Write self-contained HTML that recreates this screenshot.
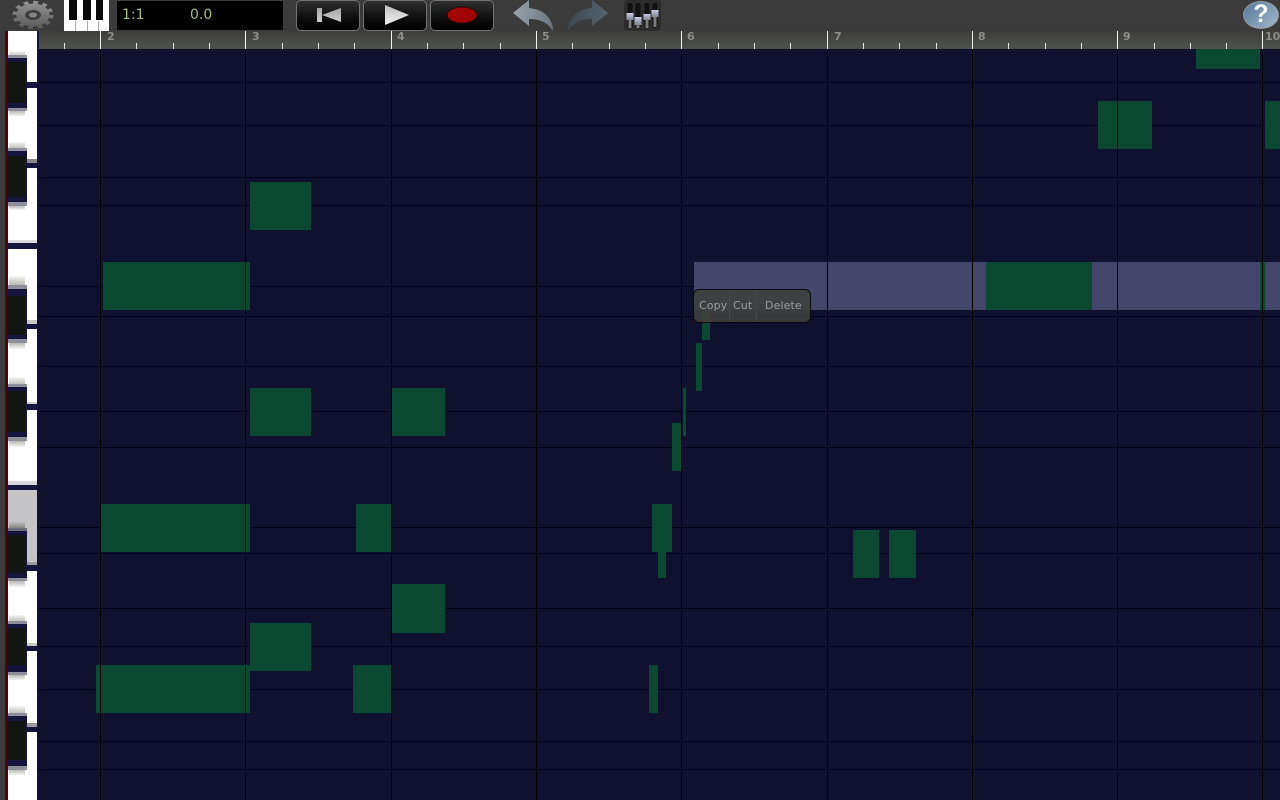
<!DOCTYPE html>
<html><head><meta charset="utf-8"><style>
html,body{margin:0;padding:0;background:#10112f;width:1280px;height:800px;overflow:hidden;font-family:"Liberation Sans",sans-serif}
div{position:absolute}
#top{left:0;top:0;width:1280px;height:31px;background:#3b3b3b}
#ruler{left:38px;top:31px;width:1242px;height:18px;background:linear-gradient(#3d3e3c,#50524e)}
.h{left:38px;width:1242px;height:1px;background:#00001a}
.v{top:49px;width:1px;height:751px;background:#000}
.n{background:#0a4832}
.t{top:43px;width:1px;height:6px;background:#e8e8e8}
.m{top:31px;width:1px;height:18px;background:#f2f2f2}
.l{top:30px;color:#8c8c8c;font:bold 11px "DejaVu Sans",sans-serif;line-height:13px}
.w{left:8px;width:29px;background:#fff}
.bk{left:7px;width:20px;background:#14143c}
.bi{left:7px;width:18px;background:#121412}
.g{left:8px;width:19px;background:#8f8f9c}
.f{left:9px;width:16px;background:linear-gradient(#f6f6f4,#b8b8b4)}
.f2{left:9px;width:16px;background:linear-gradient(#b8b8b4,#f6f6f4)}
.btn{top:0;width:62px;height:29px;border:1px solid #737373;border-radius:5px;background:linear-gradient(#303030,#101010 55%,#000)}
.p{top:298px;color:#9c9c9c;font:11px/15px "DejaVu Sans",sans-serif;letter-spacing:.1px}
</style></head><body>
<div style="left:0;top:31px;width:5px;height:769px;background:#3c3c3c"></div>
<div style="left:5px;top:31px;width:2px;height:769px;background:#4c0a0a"></div>
<div style="left:7px;top:31px;width:30px;height:769px;background:#14143c"></div>
<div class="w" style="top:31px;height:51px"></div>
<div class="w" style="top:88px;height:71px"></div>
<div class="w" style="top:168px;height:75px"></div>
<div class="w" style="top:249px;height:75px"></div>
<div class="w" style="top:329px;height:75px"></div>
<div class="w" style="top:410px;height:75px"></div>
<div class="w" style="top:490px;height:75px;background:#c5c5c8"></div>
<div class="w" style="top:571px;height:75px"></div>
<div class="w" style="top:651px;height:76px"></div>
<div class="w" style="top:732px;height:68px"></div>
<div style="left:27px;top:159px;width:10px;height:4px;background:#8a8888"></div>
<div style="left:27px;top:163px;width:10px;height:5px;background:#14143c"></div>
<div style="left:8px;top:240px;width:29px;height:3px;background:#dcdce0"></div>
<div style="left:27px;top:320px;width:10px;height:4px;background:#c8c8c4"></div>
<div style="left:27px;top:402px;width:10px;height:2px;background:#d0d0cc"></div>
<div style="left:8px;top:481px;width:29px;height:4px;background:#d8d8dc"></div>
<div style="left:27px;top:562px;width:10px;height:3px;background:#9a9a9a"></div>
<div style="left:27px;top:643px;width:10px;height:3px;background:#c8c8c4"></div>
<div style="left:27px;top:723px;width:10px;height:4px;background:#9a9a9a"></div>

<div class="f" style="top:51px;height:6px"></div><div class="g" style="top:55px;height:3px"></div><div class="bk" style="top:58px;height:50px"></div><div class="bi" style="top:62px;height:41px"></div><div class="g" style="top:108px;height:3px"></div><div class="f2" style="top:111px;height:5px"></div>
<div class="f" style="top:142px;height:7px"></div><div class="g" style="top:148px;height:3px"></div><div class="bk" style="top:151px;height:51px"></div><div class="bi" style="top:156px;height:41px"></div><div class="g" style="top:202px;height:4px"></div><div class="f2" style="top:206px;height:4px"></div>
<div class="f" style="top:276px;height:9px"></div><div class="g" style="top:285px;height:4px"></div><div class="bk" style="top:289px;height:50px"></div><div class="bi" style="top:296px;height:39px"></div><div class="g" style="top:339px;height:4px"></div><div class="f2" style="top:343px;height:6px"></div>
<div class="f" style="top:377px;height:8px"></div><div class="g" style="top:384px;height:3px"></div><div class="bk" style="top:387px;height:50px"></div><div class="bi" style="top:391px;height:41px"></div><div class="g" style="top:437px;height:4px"></div><div class="f2" style="top:441px;height:6px"></div>
<div class="f" style="top:521px;height:8px;background:linear-gradient(#c5c5c8,#7e7e7a)"></div><div class="g" style="top:528px;height:3px;background:#6e6e7a"></div><div class="bk" style="top:531px;height:47px"></div><div class="bi" style="top:535px;height:38px"></div><div class="g" style="top:578px;height:3px"></div><div class="f2" style="top:581px;height:6px"></div>
<div class="f" style="top:615px;height:7px"></div><div class="g" style="top:621px;height:3px"></div><div class="bk" style="top:624px;height:48px"></div><div class="bi" style="top:628px;height:37px"></div><div class="g" style="top:672px;height:3px"></div><div class="f2" style="top:675px;height:5px"></div>
<div class="f" style="top:706px;height:8px"></div><div class="g" style="top:713px;height:3px"></div><div class="bk" style="top:716px;height:50px"></div><div class="bi" style="top:721px;height:39px"></div><div class="g" style="top:766px;height:4px"></div><div class="f2" style="top:770px;height:5px"></div>

<div class="h" style="top:82px"></div><div class="h" style="top:125px"></div><div class="h" style="top:177px"></div><div class="h" style="top:205px"></div><div class="h" style="top:286px"></div><div class="h" style="top:316px"></div><div class="h" style="top:366px"></div><div class="h" style="top:411px"></div><div class="h" style="top:447px"></div><div class="h" style="top:527px"></div><div class="h" style="top:553px"></div><div class="h" style="top:608px"></div><div class="h" style="top:646px"></div><div class="h" style="top:689px"></div><div class="h" style="top:741px"></div><div class="h" style="top:769px"></div>

<div class="n" style="left:1196px;top:49px;width:64px;height:20px"></div>
<div class="n" style="left:1098px;top:101px;width:54px;height:48px"></div>
<div class="n" style="left:1265px;top:101px;width:15px;height:48px"></div>
<div class="n" style="left:250px;top:182px;width:61px;height:48px"></div>
<div class="n" style="left:103px;top:262px;width:147px;height:48px"></div>
<div class="n" style="left:250px;top:388px;width:61px;height:48px"></div>
<div class="n" style="left:392px;top:388px;width:53px;height:48px"></div>
<div class="n" style="left:101px;top:504px;width:149px;height:48px"></div>
<div class="n" style="left:356px;top:504px;width:35px;height:48px"></div>
<div class="n" style="left:392px;top:584px;width:53px;height:49px"></div>
<div class="n" style="left:250px;top:623px;width:61px;height:48px"></div>
<div class="n" style="left:96px;top:665px;width:154px;height:48px"></div>
<div class="n" style="left:353px;top:665px;width:38px;height:48px"></div>
<div class="n" style="left:649px;top:665px;width:9px;height:48px"></div>
<div class="n" style="left:652px;top:504px;width:20px;height:48px"></div>
<div class="n" style="left:658px;top:552px;width:8px;height:26px"></div>
<div class="n" style="left:853px;top:530px;width:26px;height:48px"></div>
<div class="n" style="left:889px;top:530px;width:27px;height:48px"></div>
<div class="n" style="left:672px;top:423px;width:10px;height:48px"></div>
<div class="n" style="left:683px;top:388px;width:3px;height:48px"></div>
<div class="n" style="left:696px;top:343px;width:6px;height:48px"></div>
<div class="n" style="left:702px;top:292px;width:8px;height:48px"></div>

<div style="left:694px;top:262px;width:586px;height:48px;background:#43456b"></div>
<div class="n" style="left:986px;top:262px;width:106px;height:48px"></div>
<div class="n" style="left:1260px;top:262px;width:5px;height:48px"></div>

<div class="v" style="left:100px"></div><div class="v" style="left:245px"></div><div class="v" style="left:391px"></div><div class="v" style="left:536px"></div><div class="v" style="left:681px"></div><div class="v" style="left:827px"></div><div class="v" style="left:972px"></div><div class="v" style="left:1117px"></div><div class="v" style="left:1262px"></div>

<div id="ruler"></div>
<div id="top"></div>
<div style="left:37px;top:31px;width:2px;height:18px;background:#14143c"></div>
<div class="t" style="left:64px"></div>
<div class="m" style="left:100px"></div><div class="t" style="left:136px"></div><div class="t" style="left:173px"></div><div class="t" style="left:209px"></div>
<div class="m" style="left:245px"></div><div class="t" style="left:282px"></div><div class="t" style="left:318px"></div><div class="t" style="left:354px"></div>
<div class="m" style="left:391px"></div><div class="t" style="left:427px"></div><div class="t" style="left:463px"></div><div class="t" style="left:500px"></div>
<div class="m" style="left:536px"></div><div class="t" style="left:572px"></div><div class="t" style="left:609px"></div><div class="t" style="left:645px"></div>
<div class="m" style="left:681px"></div><div class="t" style="left:718px"></div><div class="t" style="left:754px"></div><div class="t" style="left:790px"></div>
<div class="m" style="left:827px"></div><div class="t" style="left:863px"></div><div class="t" style="left:899px"></div><div class="t" style="left:936px"></div>
<div class="m" style="left:972px"></div><div class="t" style="left:1008px"></div><div class="t" style="left:1045px"></div><div class="t" style="left:1081px"></div>
<div class="m" style="left:1117px"></div><div class="t" style="left:1154px"></div><div class="t" style="left:1190px"></div><div class="t" style="left:1226px"></div>
<div class="m" style="left:1262px"></div>
<div class="l" style="left:107px">2</div><div class="l" style="left:252px">3</div><div class="l" style="left:397px">4</div><div class="l" style="left:542px">5</div><div class="l" style="left:687px">6</div><div class="l" style="left:834px">7</div><div class="l" style="left:978px">8</div><div class="l" style="left:1123px">9</div><div class="l" style="left:1265px">10</div>

<svg style="position:absolute;left:11px;top:0" width="44" height="30" viewBox="0 0 44 30">
<defs><linearGradient id="gg" gradientUnits="userSpaceOnUse" x1="0" y1="-14" x2="0" y2="14"><stop offset="0" stop-color="#949494"/><stop offset="1" stop-color="#5a5a5a"/></linearGradient></defs>
<g transform="translate(22,15) scale(1.45,1)">
<circle r="11.5" fill="url(#gg)"/>
<circle r="12.5" fill="none" stroke="url(#gg)" stroke-width="3.4" stroke-dasharray="3.3 3.25"/>
</g>
<ellipse cx="22" cy="15" rx="8" ry="5" fill="#3e3e3e"/><ellipse cx="22" cy="15" rx="4" ry="2.4" fill="#858585"/>
</svg>

<div style="left:64px;top:0;width:45px;height:31px;background:#fff"></div>
<div style="left:75px;top:21px;width:1px;height:10px;background:#aaa"></div><div style="left:87px;top:21px;width:1px;height:10px;background:#aaa"></div><div style="left:98px;top:21px;width:1px;height:10px;background:#aaa"></div>
<div style="left:69px;top:0;width:8px;height:20px;background:#0a0a0a"></div><div style="left:83px;top:0;width:8px;height:20px;background:#0a0a0a"></div><div style="left:96px;top:0;width:7px;height:20px;background:#0a0a0a"></div>

<div style="left:117px;top:1px;width:166px;height:29px;background:#000"></div>
<div style="left:122px;top:7px;color:#a3bd80;font:14px/17px 'DejaVu Sans',sans-serif">1:1</div>
<div style="left:190px;top:7px;color:#a3bd80;font:14px/17px 'DejaVu Sans',sans-serif">0.0</div>

<div class="btn" style="left:296px"></div><div class="btn" style="left:363px"></div><div class="btn" style="left:430px"></div>
<svg style="position:absolute;left:297px;top:0" width="200" height="30" viewBox="0 0 200 30">
<defs><linearGradient id="bg" x1="0" y1="0" x2="0" y2="1"><stop offset="0" stop-color="#a8a8a8"/><stop offset="1" stop-color="#cccccc"/></linearGradient>
<linearGradient id="pg" x1="0" y1="0" x2="0" y2="1"><stop offset="0" stop-color="#bcbcbc"/><stop offset="1" stop-color="#f4f4f4"/></linearGradient></defs>
<rect x="20" y="8" width="5" height="14" fill="url(#bg)"/><path d="M25 15L44 8V22Z" fill="url(#bg)"/>
<path d="M88 5L112 15L88 25Z" fill="url(#pg)"/>
<ellipse cx="165" cy="15" rx="15" ry="8" fill="#a00404" stroke="#2a0808" stroke-width="1"/>
</svg>

<svg style="position:absolute;left:510px;top:0" width="100" height="32" viewBox="0 0 100 32">
<defs><linearGradient id="ug" x1="0" y1="0" x2="1" y2="0"><stop offset="0" stop-color="#97a4ac"/><stop offset="1" stop-color="#6c7880"/></linearGradient>
<linearGradient id="rg" x1="0" y1="0" x2="1" y2="0"><stop offset="0" stop-color="#3e4850"/><stop offset="1" stop-color="#55646e"/></linearGradient></defs>
<path d="M3 13L19 0V8C32 9 43 17 43 31C38 23 31 19 19 19V26Z" fill="url(#ug)"/>
<path d="M98 13L82 0V8C69 9 58 17 58 31C63 23 70 19 82 19V26Z" fill="url(#rg)"/>
</svg>

<svg style="position:absolute;left:624px;top:0" width="38" height="32" viewBox="0 0 38 32">
<defs><linearGradient id="kn" x1="0" y1="0" x2="0" y2="1"><stop offset="0" stop-color="#c8cce0"/><stop offset="1" stop-color="#7d8396"/></linearGradient></defs>
<rect x="0" y="0" width="37" height="31" rx="4" fill="#2c2c2c"/>
<g fill="#111"><rect x="3.5" y="3" width="5" height="25" rx="2"/><rect x="11.5" y="3" width="5" height="25" rx="2"/><rect x="20.5" y="3" width="5" height="25" rx="2"/><rect x="28.5" y="3" width="5" height="25" rx="2"/></g>
<g fill="#7c7c7c"><rect x="4.5" y="20" width="3" height="8"/><rect x="12.5" y="25" width="3" height="3"/><rect x="21.5" y="20" width="3" height="8"/><rect x="29.5" y="17" width="3" height="10"/></g>
<g fill="url(#kn)"><rect x="2.5" y="13" width="7" height="7"/><rect x="10.5" y="17" width="7" height="8"/><rect x="19.5" y="14" width="7" height="6"/><rect x="27.5" y="10" width="7" height="7"/></g>
</svg>

<div style="left:1243px;top:1px;width:34px;height:26px;border-radius:50%;background:linear-gradient(135deg,#54789c,#a4b8c8);border:1px solid #9a9a9a"></div>
<div style="left:1244px;top:0;width:34px;height:29px;color:#fff;font:bold 25px/29px 'Liberation Sans',sans-serif;text-align:center">?</div>

<div style="left:693px;top:289px;width:116px;height:32px;border:1px solid #0a0a0a;border-radius:6px;background:rgba(62,64,62,.9)"></div>
<div style="left:729px;top:290px;width:1px;height:32px;background:#484848"></div>
<div style="left:756px;top:290px;width:1px;height:32px;background:#484848"></div>
<div class="p" style="left:699px">Copy</div>
<div class="p" style="left:733px">Cut</div>
<div class="p" style="left:765px">Delete</div>
</body></html>
